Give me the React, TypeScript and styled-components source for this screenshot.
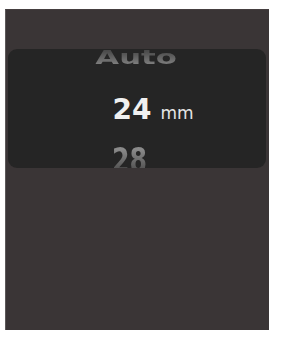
import React from 'react'
import styled, { createGlobalStyle } from 'styled-components'

const GlobalStyle = createGlobalStyle`
  html, body {
    margin: 0;
    padding: 0;
    background: #ffffff;
  }
  body {
    font-family: "DejaVu Sans", "Liberation Sans", sans-serif;
  }
`

const Page = styled.div`
  padding: 9px 0 0 5px;
`

const Panel = styled.div`
  width: 264px;
  height: 321px;
  box-sizing: border-box;
  background: #3a3536;
  border-left: 1px solid #5c5859;
  border-top: 1px solid #453f40;
  padding: 39px 3px 0 2px;
`

const PickerBox = styled.div`
  position: relative;
  height: 119px;
  border-radius: 9px;
  background: #252525;
  overflow: hidden;
`

const Wheel = styled.div`
  display: flex;
  flex-direction: column;
  align-items: center;
  margin-top: -11px;
  padding-right: 10px;
`

const Item = styled.div<{ $shiftX?: number }>`
  height: 48px;
  line-height: 48px;
  font-size: 28px;
  font-weight: 700;
  white-space: nowrap;
  transform: translateX(${(p) => p.$shiftX ?? 0}px);
`

const FadedText = styled.span<{ $from: string; $to: string; $scale: string }>`
  display: inline-block;
  background: linear-gradient(180deg, ${(p) => p.$from} 30%, ${(p) => p.$to} 80%);
  -webkit-background-clip: text;
  background-clip: text;
  color: transparent;
  transform: ${(p) => p.$scale};
`

const Selected = styled.span`
  position: relative;
  display: inline-block;
  color: #f0f0f0;
`

const Unit = styled.span`
  position: absolute;
  left: calc(100% + 9px);
  top: 19px;
  font-size: 17px;
  line-height: 17px;
  font-weight: 400;
  color: #e6e6e6;
`

export default function App() {
  return (
    <>
      <GlobalStyle />
      <Page>
        <Panel>
          <PickerBox>
            <Wheel>
              <Item $shiftX={4}>
                <FadedText $from="#4a4a4a" $to="#8e8e8e" $scale="translateY(-4px) scale(1.1, 0.72)">
                  Auto
                </FadedText>
              </Item>
              <Item>
                <Selected>
                  24
                  <Unit>mm</Unit>
                </Selected>
              </Item>
              <Item $shiftX={-3}>
                <FadedText $from="#8a8a8a" $to="#3a3a3a" $scale="translateY(3px) scale(0.9, 1.2)">
                  28
                </FadedText>
              </Item>
            </Wheel>
          </PickerBox>
        </Panel>
      </Page>
    </>
  )
}
